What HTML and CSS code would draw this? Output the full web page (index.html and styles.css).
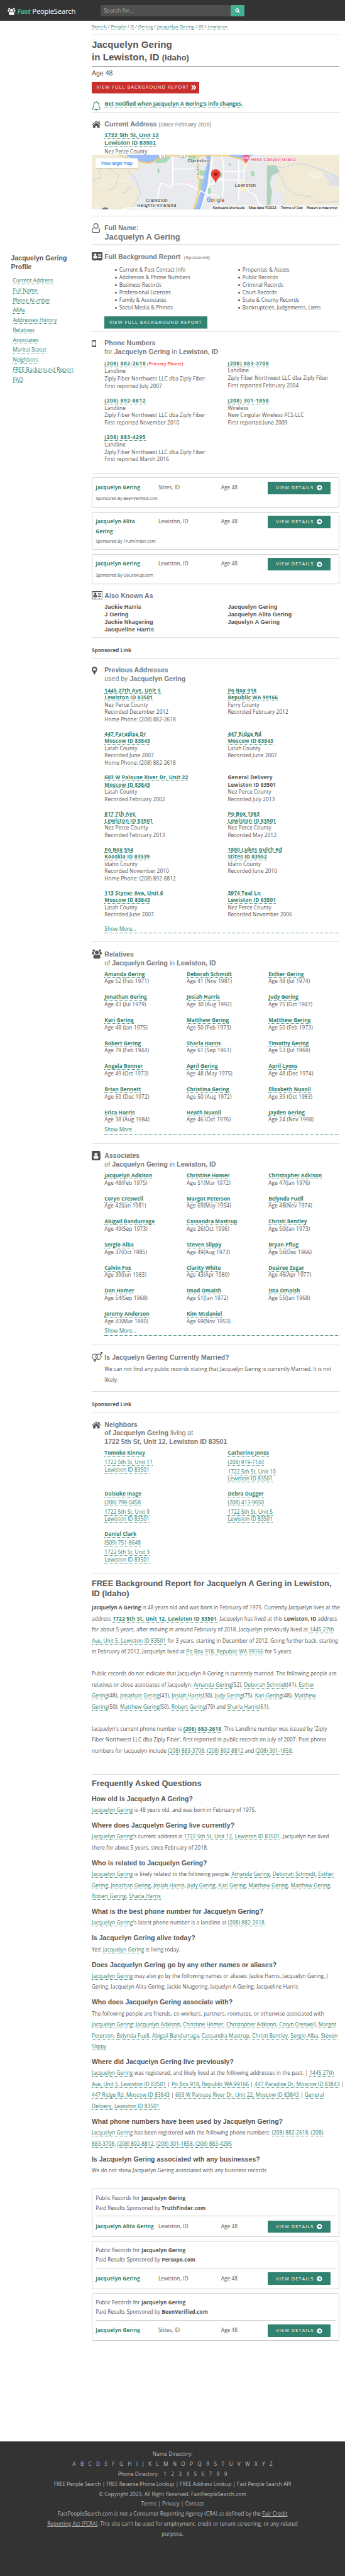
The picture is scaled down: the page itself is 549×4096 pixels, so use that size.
FILE: index.html
```html
<!DOCTYPE html>
<html lang="en">
<head>
<meta charset="utf-8">
<title>Jacquelyn Gering in Lewiston, ID</title>
<link rel="stylesheet" href="styles.css">
</head>
<body>
<svg class="defs" width="0" height="0" aria-hidden="true">
  <symbol id="i-users" viewBox="0 0 28 27">
    <circle cx="5.5" cy="4.5" r="3.6"/><circle cx="22.5" cy="4.5" r="3.6"/>
    <path d="M0 11q0-3 3-3h4q-1.5 3 1 7H2.5Q0 15 0 12.500zM28 11q0-3-3-3h-4q1.500 3-1 7h5.500q2.500 0 2.500-2.500z"/>
    <circle cx="14" cy="9.500" r="5.600"/>
    <path d="M4 22c0-4 1-7 5-7.500q5 3 10 0c4 .5 5 3.500 5 7.500q0 4.500-4 4.500H8q-4 0-4-4.500z"/>
  </symbol>
  <symbol id="i-house" viewBox="0 0 25 20">
    <path d="M12.500 5.300L3.500 12.500V18.500q0 1 1 1H10V13.500h5v6h5.500q1 0 1-1V12.500zM12.500.3L0 10.300l1.400 1.500L12.500 3 23.600 11.800 25 10.300 21.500 7.500V1.500h-3.300v3.300z"/>
  </symbol>
  <symbol id="i-arrow" viewBox="0 0 16 16">
    <circle cx="8" cy="8" r="7.600" fill="#fff"/>
    <path d="M3.800 8h7M8 4.600L11.500 8 8 11.400" fill="none" stroke="#328271" stroke-width="2"/>
  </symbol>
</svg>
<header class="topbar">
  <a class="logo"><svg class="logo-icon"><use href="#i-users"/></svg><b>Fast</b><span>PeopleSearch</span></a>
  <div class="search"><span class="search-field">Search for...</span><span class="search-btn"><svg viewBox="0 0 14 14"><circle cx="6" cy="6" r="4.200" fill="none" stroke="#fff" stroke-width="2.400"/><path d="M9 9l3.800 4" stroke="#fff" stroke-width="2.600"/></svg></span></div>
</header>
<div class="layout">
<aside class="side">
  <h4>Jacquelyn Gering<br>Profile</h4>
  <nav><a>Current Address</a><a>Full Name</a><a>Phone Number</a><a>AKAs</a><a>Addresses History</a><a>Relatives</a><a>Associates</a><a>Marital Status</a><a>Neighbors</a><a>FREE Background Report</a><a>FAQ</a></nav>
</aside>
<main class="main">
  <div class="crumbs"><a>Search</a> / <a>People</a> / <a>G</a> / <a>Gering</a> / <a>Jacquelyn Gering</a> / <a>ID</a> / <a>Lewiston</a></div>
  <h1 class="title">Jacquelyn Gering<br>in Lewiston, ID <small>(Idaho)</small></h1>
  <section class="intro">
    <div class="age">Age 48</div>
    <a class="btn-red">VIEW FULL BACKGROUND REPORT<svg viewBox="0 0 15 14"><path d="M1.500 1l5 6-5 6M7.500 1l5 6-5 6" fill="none" stroke="#fff" stroke-width="3"/></svg></a>
    <div class="notify"><svg viewBox="0 0 25 26"><path d="M1.500 22.500C6 18 4.500 13 6 8.500 7 5 9.500 3.500 12.500 3.500S18 5 19 8.500c1.500 4.500 0 9.500 4.500 14zM12.500 3.500V1" fill="none" stroke="#328271" stroke-width="1.800" stroke-linejoin="round"/><path d="M8.500 22.500h8a4 3.500 0 0 1-8 0z" fill="#328271"/></svg><a>Get notified when Jacquelyn A Gering's info changes.</a></div>
  </section>

  <section class="sec address">
    <svg class="ico house"><use href="#i-house"/></svg>
    <div class="body">
      <h3>Current Address <small>(Since February 2018)</small></h3>
      <div class="cur"><a>1722 5th St, Unit 12</a><br><a>Lewiston ID 83501</a></div>
      <div class="line">Nez Perce County</div>
    </div>
    <svg class="map" viewBox="0 0 676 150">
      <rect width="676" height="150" fill="#e8eaed"/>
      <g transform="scale(.43112 .33333) translate(0 -6)" fill="none">
        <path d="M0 6H150L240 55 330 100 275 150 225 195 300 290 310 330 290 370 280 430V456H0z" fill="#f1ead7"/>
        <path d="M1105 6H1568V456H1190L1225 305H1150L1190 140 1105 95z" fill="#f1ead7"/>
        <path d="M1145 305h70v151h-75z" fill="#e8eaed"/>
        <path d="M1470 160l35 15 25-15 38 45v60h-70l5-40-30-40z" fill="#dfe1e7"/>
        <path d="M400 30l60-10 40 5-30 45-65 5zM610 8h55l-20 70-30-10zM420 113l10 22-5 25-12-22zM865 75l18 5-4 17-14-4zM1007 142h22v40h-22zM810 153h15v35h-15zM735 280h18v48h-18zM682 205h25l-5 90h-18zM680 135h45l-15 45-30-5z" fill="#a8dab5"/>
        <path d="M1108 95l55-2 25 50-50 35-12 60 14 70-10 110-22 35V190z" fill="#b0d1be"/>
        <path d="M590 213h33v28h-33zM808 30h14v32h-14z" fill="#fce0e0"/>
        <path d="M930 235l60 5 10 60-60 5zM962 70h28v35h-28z" fill="#fdf0cb"/>
        <path d="M215 6C240 40 320 70 370 75 400 65 420 35 430 6z" fill="#9dbff9"/>
        <path d="M725 6h28l-10 130-5 30-5 70-20 120-15 100h-50l20-65 25-110 20-125 15-65z" fill="#9dbff9"/>
        <path d="M860 6h165l-50 30h-55z" fill="#9dbff9"/>
        <path d="M742 6l-3 100-15 150-28 90-15 110" stroke="#5b7db8" stroke-width="2" stroke-dasharray="8 5"/>
        <path d="M95 110l75 60-20 100-50 30M65 110L45 150 60 190 0 215M230 145l45 50 35 130-60 131M245 262l-30 55-25-5M1140 105l55 75 35 100 70 55 80 15 40 45 148-5M1145 95l60 20 90-40 70 15 90 40 113 65M975 145v70l-15 30 50 70M1240 370l-50 86" stroke="#a9c5f2" stroke-width="3"/>
        <path d="M0 260l70 3 55-50 80 5 30 10 5-50M0 355l25 45 20 56M1368 155l30-15 5 35 40-30 10 35-55 5zM1475 130l15-15v25M1370 160l25 45 80-20M1500 270h68" stroke="#fff" stroke-width="3"/>
        <path d="M512 20V240l-10 30q-8 10-18-2-15-28-47-27c-18 60-20 90-17 150q-20 55-50 50H220l-30 15M512 123H650M512 245H600L680 295 730 330Q800 330 815 370V456M765 20l-25 230-20 80-30 126M740 248q35 5 45-35H965M820 10l15 80-5 120 5 40-10 110M830 143H965M930 50v330M965 100V240l30 70 40 30 20 60 50 50" stroke="#fff" stroke-width="8"/>
        <path d="M155 0C250 45 320 75 370 75 410 60 430 15 460 13H860L940 40 975 70M671 13V180l10 35-3 75-12 75-25 100" stroke="#e9b13d" stroke-width="9"/>
        <path d="M155 0C250 45 320 75 370 75 410 60 430 15 460 13H860L940 40 975 70M671 13V180l10 35-3 75-12 75-25 100" stroke="#fde293" stroke-width="5"/>
        <circle cx="85" cy="456" r="20" fill="#647f8c"/>
        <path d="M975 83c-4-25-22-32-22-56 0-30 45-30 45 0 0 24-19 31-23 56z" fill="#f06292"/>
        <path d="M962 22v20M962 36h27v7M989 36v-7h-16" stroke="#fff" stroke-width="4"/>
        <path d="M784 237c-7-35-29-45-29-73 0-50 58-50 58 0 0 28-22 38-29 73z" fill="#ea4335" stroke="#c5221f" stroke-width="1.500"/>
        <ellipse cx="784" cy="166" rx="12" ry="15" fill="#b31412"/>
      </g>
      <g fill="#fff" stroke="#777"><rect x="183" y="-4" width="18" height="15" rx="6"/><rect x="238" y="-6" width="18" height="14" rx="6"/></g>
      <g class="map-shield"><text x="187.500" y="8">12</text><text x="242.500" y="6.500">12</text></g>
      <rect x="10" y="11" width="116" height="27" rx="2" fill="#0002"/>
      <rect x="10" y="10" width="116" height="26" rx="2" fill="#fff"/>
      <text class="map-link" x="25" y="27" textLength="86">View larger map</text>
      <g class="map-town">
        <text x="261" y="20.700" textLength="59">Clarkston</text>
        <text x="148" y="128" textLength="59">Clarkston</text>
        <text x="124" y="142" textLength="106">Heights-Vineland</text>
        <text x="390" y="88" textLength="57">Lewiston</text>
      </g>
      <text class="map-hotel" x="433" y="17.500" textLength="123">Hells Canyon Grand</text>
      <text class="map-road" x="0" y="0" transform="translate(286 31) rotate(90)">6th St</text>
      <text class="map-google" x="314" y="128" textLength="48"><tspan fill="#4285f4">G</tspan><tspan fill="#ea4335">o</tspan><tspan fill="#fbbc05">o</tspan><tspan fill="#4285f4">g</tspan><tspan fill="#34a853">l</tspan><tspan fill="#ea4335">e</tspan></text>
      <rect x="325" y="137" width="351" height="13" fill="#f5f5f5" opacity=".85"/>
      <g class="map-legal"><text x="330" y="147" textLength="87">Keyboard shortcuts</text><text x="428" y="147" textLength="75">Map data ©2023</text><text x="516" y="147" textLength="59">Terms of Use</text><text x="587" y="147" textLength="83">Report a map error</text></g>
    </svg>
  </section>

  <section class="sec fullname">
    <svg class="ico person" viewBox="0 0 23 26"><path d="M7.500 12C3.500 6 6 1.200 11.500 1.200S19.500 6 15.500 12M7.500 12C3 13 1.200 16 1.200 20.500 1.200 23.500 3 24.800 5 24.800H18C20 24.800 21.800 23.500 21.800 20.500 21.800 16 20 13 15.500 12 13 14.500 10 14.500 7.500 12z" fill="none" stroke="#555" stroke-width="2"/></svg>
    <div class="body"><h3>Full Name:</h3><div class="fn">Jacquelyn A Gering</div></div>
  </section>

  <section class="sec report">
    <svg class="ico card" viewBox="0 0 30 23"><path d="M2 0H28Q30 0 30 2V20Q30 22 28 22H24V23H20V22H10V23H6V22H2Q0 22 0 20V2Q0 0 2 0z"/><g fill="#fff"><circle cx="9.500" cy="7" r="3.300"/><path d="M4 14.500Q4 10.500 7 10 9.500 12 12 10 15 10.500 15 14.500 15 16.500 13 16.500H6Q4 16.500 4 14.500zM17 5.500h9v1.800h-9zM17 9.500h9v1.800h-9zM17 13.500h9v1.800h-9z"/></g></svg>
    <div class="body">
      <h3>Full Background Report <small class="spons">(Sponsored)</small></h3>
      <div class="two bullets"><ul><li>Current &amp; Past Contact Info</li><li>Addresses &amp; Phone Numbers</li><li>Business Records</li><li>Professional Licenses</li><li>Family &amp; Associates</li><li>Social Media &amp; Photos</li></ul><ul><li>Properties &amp; Assets</li><li>Public Records</li><li>Criminal Records</li><li>Court Records</li><li>State &amp; County Records</li><li>Bankruptcies, Judgements, Liens</li></ul></div>
      <a class="btn-green">VIEW FULL BACKGROUND REPORT</a>
    </div>
  </section>

  <section class="sec phones">
    <svg class="ico phone" viewBox="0 0 12 19"><path fill-rule="evenodd" d="M2 0h8q2 0 2 2v15q0 2-2 2H2q-2 0-2-2V2q0-2 2-2zM1.800 3.500v11h8.400v-11zM6 15.700a1.100 1.100 0 1 0 .01 0z"/></svg>
    <div class="body">
      <h3>Phone Numbers<br><i>for</i> Jacquelyn Gering <i>in</i> Lewiston, ID</h3>
      <div class="two plist">
        <p><a>(208) 882-2618</a> <em>(Primary Phone)</em><br>Landline<br>Ziply Fiber Northwest LLC dba Ziply Fiber<br>First reported July 2007</p>
        <p><a>(208) 883-3708</a><br>Landline<br>Ziply Fiber Northwest LLC dba Ziply Fiber<br>First reported February 2004</p>
        <p><a>(208) 892-8812</a><br>Landline<br>Ziply Fiber Northwest LLC dba Ziply Fiber<br>First reported November 2010</p>
        <p><a>(208) 301-1858</a><br>Wireless<br>New Cingular Wireless PCS LLC<br>First reported June 2009</p>
        <p><a>(208) 883-4295</a><br>Landline<br>Ziply Fiber Northwest LLC dba Ziply Fiber<br>First reported March 2016</p>
      </div>
    </div>
  </section>

  <div class="ads">
    <div class="ad"><div class="ad-row"><b>Jacquelyn Gering</b><span>Stites, ID</span><span>Age 48</span><a class="btn-view">VIEW DETAILS <svg><use href="#i-arrow"/></svg></a></div><div class="by">Sponsored By BeenVerified.com</div></div>
    <div class="ad"><div class="ad-row"><b>Jacquelyn Alita<br>Gering</b><span>Lewiston, ID</span><span>Age 48</span><a class="btn-view">VIEW DETAILS <svg><use href="#i-arrow"/></svg></a></div><div class="by">Sponsored By TruthFinder.com</div></div>
    <div class="ad"><div class="ad-row"><b>Jacquelyn Gering</b><span>Lewiston, ID</span><span>Age 48</span><a class="btn-view">VIEW DETAILS <svg><use href="#i-arrow"/></svg></a></div><div class="by">Sponsored By GoLookUp.com</div></div>
  </div>

  <section class="sec aka">
    <svg class="ico card" viewBox="0 0 30 23"><path fill-rule="evenodd" d="M2 0H28Q30 0 30 2V21Q30 23 28 23H2Q0 23 0 21V2Q0 0 2 0zM2 2V20.500H8V19h1.500v1.500H20.500V19H22v1.500H28V2z"/><circle cx="9.500" cy="7" r="3.300"/><path d="M4 14.500Q4 10.500 7 10 9.500 12 12 10 15 10.500 15 14.500 15 16.500 13 16.500H6Q4 16.500 4 14.500zM17 5.500h9v1.800h-9zM17 9.500h9v1.800h-9zM17 13.500h9v1.800h-9z"/></svg>
    <div class="body">
      <h3>Also Known As</h3>
      <div class="two names"><div>Jackie Harris<br>J Gering<br>Jackie Nkagering<br>Jacqueline Harris</div><div>Jacquelyn Gering<br>Jacquelyn Alita Gering<br>Jaquelyn A Gering</div></div>
    </div>
  </section>
  <div class="slink">Sponsored Link</div>

  <section class="sec prev">
    <svg class="ico pin" viewBox="0 0 15 23"><path fill-rule="evenodd" d="M7.500 23C6 17 0 12 0 7.500A7.500 7.500 0 0 1 15 7.500C15 12 9 17 7.500 23zM7.500 3.700a3.800 3.800 0 1 0 .01 0z"/></svg>
    <div class="body">
      <h3>Previous Addresses<br><i>used by</i> Jacquelyn Gering</h3>
      <div class="two plist addr">
        <p><b><a>1445 27th Ave, Unit 5</a><a>Lewiston ID 83501</a></b>Nez Perce County<br>Recorded December 2012<br>Home Phone: (208) 882-2618</p>
        <p><b><a>Po Box 918</a><a>Republic WA 99166</a></b>Ferry County<br>Recorded February 2012</p>
        <p><b><a>447 Paradise Dr</a><a>Moscow ID 83843</a></b>Latah County<br>Recorded June 2007<br>Home Phone: (208) 882-2618</p>
        <p><b><a>447 Ridge Rd</a><a>Moscow ID 83843</a></b>Latah County<br>Recorded June 2007</p>
        <p><b><a>603 W Palouse River Dr, Unit 22</a><a>Moscow ID 83843</a></b>Latah County<br>Recorded February 2002</p>
        <p><b class="plain">General Delivery<br>Lewiston ID 83501</b>Nez Perce County<br>Recorded July 2013</p>
        <p><b><a>817 7th Ave</a><a>Lewiston ID 83501</a></b>Nez Perce County<br>Recorded February 2013</p>
        <p><b><a>Po Box 1963</a><a>Lewiston ID 83501</a></b>Nez Perce County<br>Recorded May 2012</p>
        <p><b><a>Po Box 554</a><a>Kooskia ID 83539</a></b>Idaho County<br>Recorded November 2010<br>Home Phone: (208) 892-8812</p>
        <p><b><a>1880 Lukes Gulch Rd</a><a>Stites ID 83552</a></b>Idaho County<br>Recorded June 2010</p>
        <p><b><a>113 Styner Ave, Unit 6</a><a>Moscow ID 83843</a></b>Latah County<br>Recorded June 2007</p>
        <p><b><a>3974 Teal Ln</a><a>Lewiston ID 83501</a></b>Nez Perce County<br>Recorded November 2006</p>
      </div>
      <a class="more">Show More...</a>
    </div>
  </section>

  <section class="sec people">
    <svg class="ico users"><use href="#i-users"/></svg>
    <div class="body">
      <h3>Relatives<br><i>of</i> Jacquelyn Gering <i>in</i> Lewiston, ID</h3>
      <div class="three">
        <p><a>Amanda Gering</a><br>Age 52 (Feb 1971)</p><p><a>Deborah Schmidt</a><br>Age 41 (Nov 1981)</p><p><a>Esther Gering</a><br>Age 48 (Jul 1974)</p>
        <p><a>Jonathan Gering</a><br>Age 43 (Jul 1979)</p><p><a>Josiah Harris</a><br>Age 30 (Aug 1992)</p><p><a>Judy Gering</a><br>Age 75 (Oct 1947)</p>
        <p><a>Kari Gering</a><br>Age 48 (Jan 1975)</p><p><a>Matthew Gering</a><br>Age 50 (Feb 1973)</p><p><a>Matthew Gering</a><br>Age 50 (Feb 1973)</p>
        <p><a>Robert Gering</a><br>Age 79 (Feb 1944)</p><p><a>Sharla Harris</a><br>Age 61 (Sep 1961)</p><p><a>Timothy Gering</a><br>Age 53 (Jul 1969)</p>
        <p><a>Angela Bonner</a><br>Age 49 (Oct 1973)</p><p><a>April Gering</a><br>Age 48 (May 1975)</p><p><a>April Lyons</a><br>Age 48 (Dec 1974)</p>
        <p><a>Brian Bennett</a><br>Age 50 (Dec 1972)</p><p><a>Christina Gering</a><br>Age 50 (Aug 1972)</p><p><a>Elizabeth Nuxoll</a><br>Age 39 (Oct 1983)</p>
        <p><a>Erica Harris</a><br>Age 38 (Aug 1984)</p><p><a>Heath Nuxoll</a><br>Age 46 (Oct 1976)</p><p><a>Jayden Gering</a><br>Age 24 (Nov 1998)</p>
      </div>
      <a class="more">Show More...</a>
    </div>
  </section>

  <section class="sec people">
    <svg class="ico book" viewBox="0 0 25 27"><path d="M2 0H21Q23 0 23 2V5h2v4.500h-2V11h2v4.500h-2V17h2v4.500h-2V25Q23 27 21 27H2Q0 27 0 25V2Q0 0 2 0z"/><g fill="#fff"><circle cx="11.500" cy="9.500" r="3.800"/><path d="M5 18.500C5 15 6 13.500 8.500 13Q11.500 15 14.500 13C17 13.500 18 15 18 18.500Q18 21.500 15.500 21.500H7.500Q5 21.500 5 18.500z"/></g></svg>
    <div class="body">
      <h3>Associates<br><i>of</i> Jacquelyn Gering <i>in</i> Lewiston, ID</h3>
      <div class="three">
        <p><a>Jacquelyn Adkison</a><br>Age 48(Feb 1975)</p><p><a>Christine Homer</a><br>Age 51(Mar 1972)</p><p><a>Christopher Adkison</a><br>Age 47(Jan 1976)</p>
        <p><a>Coryn Creswell</a><br>Age 42(Jan 1981)</p><p><a>Margot Peterson</a><br>Age 69(May 1954)</p><p><a>Belynda Fuell</a><br>Age 48(Nov 1974)</p>
        <p><a>Abigail Bandurraga</a><br>Age 49(Sep 1973)</p><p><a>Cassandra Mastrup</a><br>Age 26(Oct 1996)</p><p><a>Christi Bentley</a><br>Age 50(Jan 1973)</p>
        <p><a>Sergio Alba</a><br>Age 37(Oct 1985)</p><p><a>Steven Slippy</a><br>Age 49(Aug 1973)</p><p><a>Bryan Pflug</a><br>Age 56(Dec 1966)</p>
        <p><a>Calvin Fox</a><br>Age 39(Jun 1983)</p><p><a>Clarity White</a><br>Age 43(Apr 1980)</p><p><a>Desiree Zegar</a><br>Age 46(Apr 1977)</p>
        <p><a>Don Homer</a><br>Age 54(Sep 1968)</p><p><a>Imad Omaish</a><br>Age 51(Jan 1972)</p><p><a>Issa Omaish</a><br>Age 55(Jan 1968)</p>
        <p><a>Jeremy Anderson</a><br>Age 43(Mar 1980)</p><p><a>Kim Mcdaniel</a><br>Age 69(Nov 1953)</p>
      </div>
      <a class="more">Show More...</a>
    </div>
  </section>

  <section class="sec married">
    <svg class="ico gender" viewBox="0 0 30 27"><g fill="none" stroke="#555" stroke-width="2"><circle cx="8.500" cy="12.500" r="7.300"/><circle cx="18.500" cy="12.500" r="7.300"/><path d="M8.500 20v7M5 23.500h7M23.500 7l5-5.500M24 1h5v5.500"/></g></svg>
    <div class="body"><h3>Is Jacquelyn Gering Currently Married?</h3><p>We can not find any public records stating that Jacquelyn Gering is currently Married. It is not<br>likely.</p></div>
  </section>
  <div class="slink">Sponsored Link</div>

  <section class="sec neigh">
    <svg class="ico house"><use href="#i-house"/></svg>
    <div class="body">
      <h3>Neighbors<br>of Jacquelyn Gering <i>living at</i><br>1722 5th St, Unit 12, Lewiston ID 83501</h3>
      <div class="two nlist">
        <div><b><a>Tomoko Kinney</a></b><p><a>1722 5th St, Unit 11</a><br><a>Lewiston ID 83501</a></p></div>
        <div><b><a>Catherine Jones</a></b><p><a>(208) 919-7144</a></p><p><a>1722 5th St, Unit 10</a><br><a>Lewiston ID 83501</a></p></div>
        <div><b><a>Daisuke Inage</a></b><p><a>(208) 798-0458</a></p><p><a>1722 5th St, Unit 9</a><br><a>Lewiston ID 83501</a></p></div>
        <div><b><a>Debra Dugger</a></b><p><a>(208) 413-9650</a></p><p><a>1722 5th St, Unit 5</a><br><a>Lewiston ID 83501</a></p></div>
        <div><b><a>Daniel Clark</a></b><p><a>(509) 751-8648</a></p><p><a>1722 5th St, Unit 3</a><br><a>Lewiston ID 83501</a></p></div>
      </div>
    </div>
  </section>

  <section class="free">
    <h2>FREE Background Report for Jacquelyn A Gering in Lewiston,<br>ID (Idaho)</h2>
    <p><b>Jacquelyn A Gering</b> is 48 years old and was born in February of 1975. Currently Jacquelyn lives at the<br>address <a class="strong">1722 5th St, Unit 12, Lewiston ID 83501</a>. Jacquelyn has lived at this <b>Lewiston, ID</b> address<br>for about 5 years, after moving in around February of 2018. Jacquelyn previously lived at <a>1445 27th<br>Ave, Unit 5, Lewiston ID 83501</a> for 3 years, starting in December of 2012. Going further back, starting<br>in February of 2012, Jacquelyn lived at <a>Po Box 918, Republic WA 99166</a> for 5 years.</p>
    <p>Public records do not indicate that Jacquelyn A Gering is currently married. The following people are<br>relatives or close associates of Jacquelyn: <a>Amanda Gering</a>(52), <a>Deborah Schmidt</a>(41), <a>Esther<br>Gering</a>(48), <a>Jonathan Gering</a>(43), <a>Josiah Harris</a>(30), <a>Judy Gering</a>(75), <a>Kari Gering</a>(48), <a>Matthew<br>Gering</a>(50), <a>Matthew Gering</a>(50), <a>Robert Gering</a>(79) and <a>Sharla Harris</a>(61).</p>
    <p>Jacquelyn's current phone number is <a class="strong">(208) 882-2618</a>. This Landline number was issued by 'Ziply<br>Fiber Northwest LLC dba Ziply Fiber', first reported in public records on July of 2007. Past phone<br>numbers for Jacquelyn include <a>(208) 883-3708</a>, <a>(208) 892-8812</a> and <a>(208) 301-1858</a>.</p>
  </section>

  <section class="faq">
    <h2>Frequently Asked Questions</h2>
    <h3>How old is Jacquelyn A Gering?</h3>
    <p><a>Jacquelyn Gering</a> is 48 years old, and was born in February of 1975.</p>
    <h3>Where does Jacquelyn Gering live currently?</h3>
    <p><a>Jacquelyn Gering</a>'s current address is <a>1722 5th St, Unit 12, Lewiston ID 83501</a>. Jacquelyn has lived<br>there for about 5 years, since February of 2018.</p>
    <h3>Who is related to Jacquelyn Gering?</h3>
    <p><a>Jacquelyn Gering</a> is likely related to the following people: <a>Amanda Gering</a>, <a>Deborah Schmidt</a>, <a>Esther<br>Gering</a>, <a>Jonathan Gering</a>, <a>Josiah Harris</a>, <a>Judy Gering</a>, <a>Kari Gering</a>, <a>Matthew Gering</a>, <a>Matthew Gering</a>,<br><a>Robert Gering</a>, <a>Sharla Harris</a></p>
    <h3>What is the best phone number for Jacquelyn Gering?</h3>
    <p><a>Jacquelyn Gering</a>'s latest phone number is a landline at <a>(208) 882-2618</a>.</p>
    <h3>Is Jacquelyn Gering alive today?</h3>
    <p>Yes! <a>Jacquelyn Gering</a> is living today.</p>
    <h3>Does Jacquelyn Gering go by any other names or aliases?</h3>
    <p><a>Jacquelyn Gering</a> may also go by the following names or aliases: Jackie Harris, Jacquelyn Gering, J<br>Gering, Jacquelyn Alita Gering, Jackie Nkagering, Jaquelyn A Gering, Jacqueline Harris</p>
    <h3>Who does Jacquelyn Gering associate with?</h3>
    <p>The following people are friends, co-workers, partners, roomates, or otherwise associated with<br><a>Jacquelyn Gering</a>: <a>Jacquelyn Adkison</a>, <a>Christine Homer</a>, <a>Christopher Adkison</a>, <a>Coryn Creswell</a>, <a>Margot<br>Peterson</a>, <a>Belynda Fuell</a>, <a>Abigail Bandurraga</a>, <a>Cassandra Mastrup</a>, <a>Christi Bentley</a>, <a>Sergio Alba</a>, <a>Steven<br>Slippy</a></p>
    <h3>Where did Jacquelyn Gering live previously?</h3>
    <p><a>Jacquelyn Gering</a> was registered, and likely lived at the following addresses in the past: | <a>1445 27th<br>Ave, Unit 5, Lewiston ID 83501</a> | <a>Po Box 918, Republic WA 99166</a> | <a>447 Paradise Dr, Moscow ID 83843</a> |<br><a>447 Ridge Rd, Moscow ID 83843</a> | <a>603 W Palouse River Dr, Unit 22, Moscow ID 83843</a> | <a>General<br>Delivery, Lewiston ID 83501</a></p>
    <h3>What phone numbers have been used by Jacquelyn Gering?</h3>
    <p><a>Jacquelyn Gering</a> has been registered with the following phone numbers: <a>(208) 882-2618</a>, <a>(208)<br>883-3708</a>, <a>(208) 892-8812</a>, <a>(208) 301-1858</a>, <a>(208) 883-4295</a></p>
    <h3>Is Jacquelyn Gering associated wth any businesses?</h3>
    <p>We do not show Jacquelyn Gering associated with any business records</p>
  </section>

  <div class="records">
    <div class="rec"><div class="rec-head">Public Records for <b>Jacquelyn Gering</b><br>Paid Results Sponsored by <b>TruthFinder.com</b></div><div class="ad-row"><b>Jacquelyn Alita Gering</b><span>Lewiston, ID</span><span>Age 48</span><a class="btn-view">VIEW DETAILS <svg><use href="#i-arrow"/></svg></a></div></div>
    <div class="rec"><div class="rec-head">Public Records for <b>Jacquelyn Gering</b><br>Paid Results Sponsored by <b>Persopo.com</b></div><div class="ad-row"><b>Jacquelyn Gering</b><span>Lewiston, ID</span><span>Age 48</span><a class="btn-view">VIEW DETAILS <svg><use href="#i-arrow"/></svg></a></div></div>
    <div class="rec"><div class="rec-head">Public Records for <b>Jacquelyn Gering</b><br>Paid Results Sponsored by <b>BeenVerified.com</b></div><div class="ad-row"><b>Jacquelyn Gering</b><span>Stites, ID</span><span>Age 48</span><a class="btn-view">VIEW DETAILS <svg><use href="#i-arrow"/></svg></a></div></div>
  </div>
</main>
</div>
<footer class="foot">
  <div>Name Directory:</div>
  <div class="letters"><a>A</a><a>B</a><a>C</a><a>D</a><a>E</a><a>F</a><a>G</a><a>H</a><a>I</a><a>J</a><a>K</a><a>L</a><a>M</a><a>N</a><a>O</a><a>P</a><a>Q</a><a>R</a><a>S</a><a>T</a><a>U</a><a>V</a><a>W</a><a>X</a><a>Y</a><a>Z</a></div>
  <div class="letters"><a>Phone Directory:</a><a>1</a><a>2</a><a>3</a><a>4</a><a>5</a><a>6</a><a>7</a><a>8</a><a>9</a></div>
  <div class="tight">FREE People Search | FREE Reverse Phone Lookup | FREE Address Lookup | Fast People Search API</div>
  <div>© Copyright 2023. All Right Reserved. FastPeopleSearch.com</div>
  <div>Terms | Privacy | Contact</div>
  <div>FastPeopleSearch.com is not a Consumer Reporting Agency (CRA) as defined by the <u>Fair Credit<br>Reporting Act (FCRA)</u>. This site can't be used for employment, credit or tenant screening, or any related<br>purpose.</div>
</footer>
</body>
</html>
```

FILE: styles.css
```css
/* 1rem = 10 design pixels */
html { font-size: 5.836px; }
* { box-sizing: border-box; margin: 0; padding: 0; }
body {
  width: 94.1rem; height: 4096px; overflow: hidden;
  display: flex; flex-direction: column;
  font: 1.42rem/2rem "Open Sans", "Noto Sans", sans-serif;
  letter-spacing: .008rem;
  color: #555; background: #fff; white-space: nowrap;
}
.defs { position: absolute; }
h1, h2, h3, h4, small, .age, .fn, .cur, .names { font-family: "Liberation Sans", Arial, sans-serif; }
ul { list-style: none; }
main a, aside a { color: #328271; border-bottom: 1px dotted #328271; }

.topbar { height: 5.7rem; flex: none; background: #333; display: flex; align-items: center; padding-left: 2rem; color: #fff; }
.logo { width: 25.4rem; display: flex; align-items: center; font-size: 1.95rem; line-height: 3rem; padding-top: .4rem; }
.logo-icon { width: 2.2rem; height: 2.1rem; fill: #fff; stroke: #333; stroke-width: .8; margin-right: .5rem; }
.logo b { color: #43b094; font-style: italic; width: 4.1rem; letter-spacing: -.08rem; }
.logo span { letter-spacing: -.05rem; }
.search { display: flex; height: 3.1rem; }
.search-field { width: 35.500rem; background: #4f4f4f; color: #aaa; padding-left: .9rem; font-size: 1.5rem; line-height: 3.2rem; letter-spacing: -.015rem; }
.search-btn { width: 3.8rem; background: #43b094; border-radius: .2rem; display: flex; align-items: center; justify-content: center; padding-top: .2rem; }
.search-btn svg { width: 1.3rem; height: 1.3rem; }

.layout { display: flex; height: 659.5rem; flex: none; }
.side { width: 25rem; flex: none; padding: 63.6rem 0 0 3rem; }
.side h4 { font-size: 1.8rem; line-height: 2.3rem; }
.side nav { padding: 1.5rem 0 0 .5rem; display: flex; flex-direction: column; align-items: flex-start; gap: .7rem; }
.side nav a { line-height: 2rem; height: 2rem; }
.main { width: 67.6rem; }

.crumbs { height: 3.9rem; padding-top: .7rem; font-size: 1.27rem; letter-spacing: .013rem; border-bottom: 1px solid #ddd; }
.title { height: 8.600rem; padding-top: .8rem; font-size: 2.6rem; line-height: 3.4rem; border-bottom: 1px solid #999; }
.title small { font-size: 2.2rem; }
.intro { height: 12.4rem; padding-top: .5rem; border-bottom: 1px solid #ddd; display: flex; flex-direction: column; align-items: flex-start; }
.age { font-size: 1.8rem; line-height: 2.4rem; }
.main .btn-red, .main .btn-green { display: flex; align-items: center; height: 3.4rem; padding-left: 1.3rem; color: #fff; font-size: 1.28rem; letter-spacing: .178rem; border-radius: .2rem; }
.main .btn-red { margin-top: 1.1rem; width: 29.3rem; background: #c9302c; border-bottom-color: #fff; }
.btn-red svg { width: 1.500rem; height: 1.4rem; margin-left: .5rem; }
.main .btn-green { margin-top: 1.500rem; width: 28rem; background: #328271; border-bottom-color: #fff; }
.notify { margin-top: 1.7rem; display: flex; align-items: flex-start; }
.notify svg { width: 2.500rem; height: 2.7rem; margin: .2rem 1rem 0 0; }
.notify a { font-size: 1.48rem; letter-spacing: -.02rem; font-weight: bold; line-height: 2.1rem; }

.sec { display: grid; grid-template-columns: 3.500rem 1fr; align-content: start; padding-top: 2rem; border-bottom: 1px solid #ddd; }
.sec .body { min-width: 0; }
.sec h3 { font-size: 1.8rem; line-height: 2.4rem; color: #777; }
.sec h3 i { font-weight: normal; font-style: normal; }
.sec h3 small { font-weight: normal; font-size: 1.43rem; }
.sec h3 small.spons { font-size: 1.27rem; margin-left: .5rem; }
.ico { fill: #555; }
.ico.house { width: 2.500rem; height: 2rem; margin-top: .3rem; }
.ico.person { width: 2.3rem; height: 2.6rem; }
.ico.card { width: 3rem; height: 2.3rem; }
.ico.phone { width: 1.2rem; height: 1.9rem; margin-top: .3rem; }
.ico.pin { width: 1.500rem; height: 2.3rem; margin-top: .1rem; }
.ico.users { width: 2.8rem; height: 2.7rem; stroke: #fff; stroke-width: .7; margin-top: -.1rem; }
.ico.book { width: 2.500rem; height: 2.7rem; margin-top: -.1rem; }
.ico.gender { width: 3rem; height: 2.7rem; margin-top: -.1rem; }

.two { display: grid; grid-template-columns: 33.6rem 1fr; }
.three { display: grid; grid-template-columns: 22.4rem 22.3rem 1fr; gap: 2rem 0; margin-top: .8rem; height: 42rem; letter-spacing: .027rem; }
.three a { font-weight: bold; letter-spacing: .005rem; }
.more { display: block; }

.address { height: 28.3rem; }
.cur { margin-top: .9rem; font-size: 1.6rem; font-weight: bold; line-height: 2.03rem; }
.line { padding-top: .1rem; letter-spacing: 0; }
.map { grid-column: 1 / 3; width: 67.6rem; height: 15rem; margin-top: -.1rem; font-family: Roboto, sans-serif; letter-spacing: 0; }
.map-shield { font-size: 8px; fill: #555; }
.map-link { font-size: 12.500px; fill: #1a73e8; }
.map-town { font-size: 13px; fill: #202124; stroke: #fff; stroke-width: 2px; paint-order: stroke; }
.map-hotel { font-size: 13.500px; fill: #e91e63; stroke: #fff; stroke-width: 2px; paint-order: stroke; }
.map-road { font-size: 9.500px; fill: #806a3a; stroke: #fff; stroke-width: 2px; paint-order: stroke; }
.map-google { font-size: 15px; font-weight: 500; }
.map-legal { font-size: 10px; fill: #111; }

.fullname { height: 7.75rem; }
.fullname .fn { font-size: 2.2rem; line-height: 2.8rem; font-weight: bold; color: #777; }
.report { height: 23.8rem; padding-top: 2.1rem; }
.bullets { margin-top: 1.05rem; padding-left: 4rem; line-height: 2.04rem; letter-spacing: 0; }
.bullets li::before { content: ""; display: inline-block; width: .5rem; height: .5rem; border-radius: 50%; background: #555; margin: 0 .7rem .2rem -1.2rem; }
.phones { height: 38.65rem; }
.phones h3 { line-height: 2.3rem; }
.plist { margin-top: .9rem; gap: 2rem 0; letter-spacing: .014rem; }
.phones a { font-weight: bold; letter-spacing: .098rem; }
.phones em { font-style: normal; color: #f00; font-size: 1.3rem; letter-spacing: .005rem; }

.ads { padding-top: 1.04rem; }
.ad { height: 8.2rem; border: 1px solid #ccc; border-radius: .4rem; margin-bottom: 1.1rem; padding: .9rem 0 0 .9rem; }
.ad:nth-child(2) { height: 10.4rem; }
.ad:last-child { margin-bottom: 0; }
.ad-row { display: grid; grid-template-columns: 17.1rem 17.1rem 12.8rem 17rem; line-height: 2.7rem; min-height: 3.73rem; align-items: start; }
.ad-row b, .ad-row span { padding-top: .2rem; }
.ad-row b { color: #328271; letter-spacing: .013rem; }
.ad:nth-child(2) b { padding-bottom: .33rem; }
.by { font-size: 1.15rem; letter-spacing: -.01rem; }
.main .btn-view { height: 3.4rem; background: #328271; border: 0; border-radius: .2rem; color: #fff; display: flex; align-items: center; justify-content: center; gap: .8rem; font-size: 1.28rem; letter-spacing: .172rem; }
.btn-view svg { width: 1.500rem; height: 1.500rem; }

.aka { height: 14.56rem; padding-top: 1.94rem; }
.names { margin-top: .84rem; font-size: 1.6rem; font-weight: bold; line-height: 2.06rem; }
.slink { height: 5.85rem; padding-top: 2.45rem; font-weight: bold; letter-spacing: 0; border-bottom: 1px solid #ddd; }

.prev { height: 77.2rem; }
.prev h3 { line-height: 2.35rem; }
.addr { row-gap: 1.96rem; }
.addr b { display: flex; flex-direction: column; align-items: flex-start; letter-spacing: .027rem; line-height: 1.94rem; }
.addr b a { height: 1.94rem; }
.addr b.plain { display: block; }
.prev .more { margin-top: 1.9rem; }

.people { height: 54.9rem; }
.people .more { height: 2.8rem; line-height: 2.8rem; }
.married { height: 12.65rem; }
.married p { margin-top: .8rem; line-height: 2.9rem; }
.neigh { height: 43.9rem; }
.neigh h3 { line-height: 2.37rem; }
.nlist { margin-top: .75rem; gap: 2rem 0; }
.nlist p { margin-top: .5rem; }

.free { height: 54.6rem; padding-top: 1.1rem; border-bottom: 1px solid #ddd; }
h2 { font-size: 2.2rem; line-height: 2.85rem; }
.free h2 { margin-bottom: .75rem; }
.free p, .faq p { line-height: 3rem; letter-spacing: .011rem; }
.free p { margin-bottom: 3rem; }
.free .strong { font-weight: bold; letter-spacing: .035rem; }
.faq { height: 112.85rem; padding-top: 1rem; }
.faq h3 { font-size: 1.8rem; line-height: 2.6rem; margin: 1.46rem 0 .18rem; }

.rec { height: 13.1rem; border: 1px solid #ccc; border-radius: .4rem; margin-bottom: 1.1rem; padding: .95rem .9rem 0; }
.rec-head { line-height: 2.7rem; height: 6.4rem; border-bottom: 1px solid #ccc; margin-bottom: 1.1rem; }

.foot { flex: 1; background: #333; color: #bbb; text-align: center; padding-top: 2.1rem; line-height: 2.71rem; }
.tight { letter-spacing: -.006rem; }
.letters a + a { margin-left: 1.25rem; }
```
